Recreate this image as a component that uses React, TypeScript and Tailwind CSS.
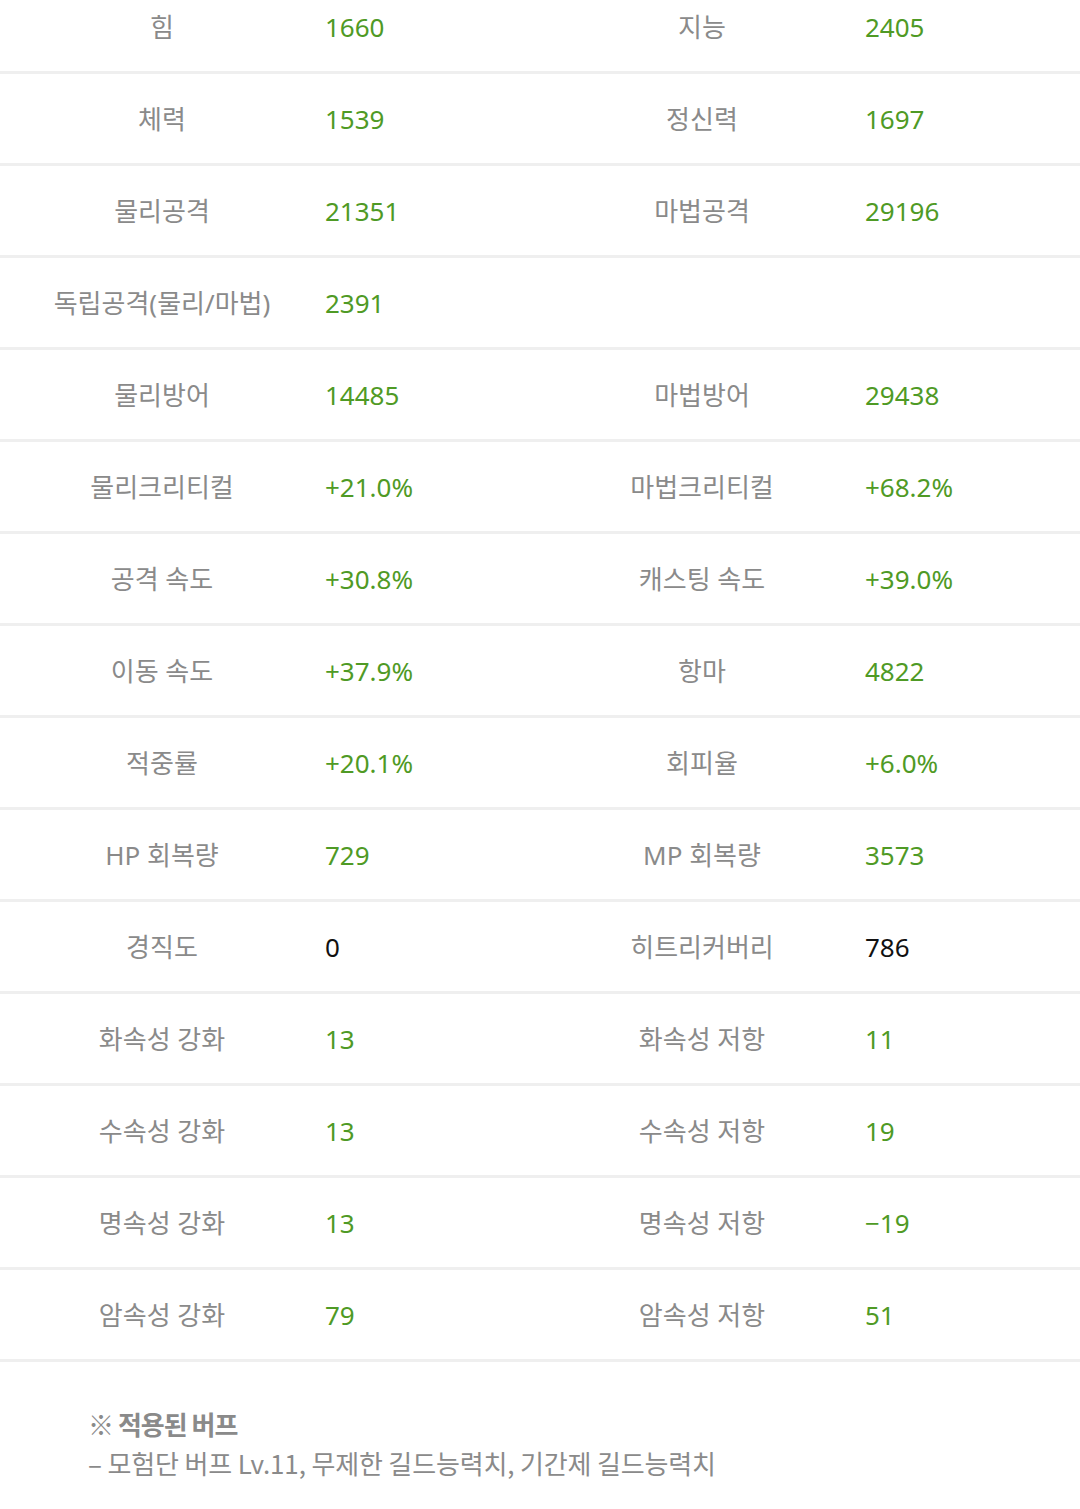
import React from 'react';

interface Stat {
  label: string;
  value: string;
  plain?: boolean;
}

const rows: [Stat, Stat | null][] = [
  [{ label: '힘', value: '1660' }, { label: '지능', value: '2405' }],
  [{ label: '체력', value: '1539' }, { label: '정신력', value: '1697' }],
  [{ label: '물리공격', value: '21351' }, { label: '마법공격', value: '29196' }],
  [{ label: '독립공격(물리/마법)', value: '2391' }, null],
  [{ label: '물리방어', value: '14485' }, { label: '마법방어', value: '29438' }],
  [{ label: '물리크리티컬', value: '+21.0%' }, { label: '마법크리티컬', value: '+68.2%' }],
  [{ label: '공격 속도', value: '+30.8%' }, { label: '캐스팅 속도', value: '+39.0%' }],
  [{ label: '이동 속도', value: '+37.9%' }, { label: '항마', value: '4822' }],
  [{ label: '적중률', value: '+20.1%' }, { label: '회피율', value: '+6.0%' }],
  [{ label: 'HP 회복량', value: '729' }, { label: 'MP 회복량', value: '3573' }],
  [{ label: '경직도', value: '0', plain: true }, { label: '히트리커버리', value: '786', plain: true }],
  [{ label: '화속성 강화', value: '13' }, { label: '화속성 저항', value: '11' }],
  [{ label: '수속성 강화', value: '13' }, { label: '수속성 저항', value: '19' }],
  [{ label: '명속성 강화', value: '13' }, { label: '명속성 저항', value: '−19' }],
  [{ label: '암속성 강화', value: '79' }, { label: '암속성 저항', value: '51' }],
];

const Cell = ({ stat }: { stat: Stat | null }) => (
  <>
    <div className="w-[324px] text-center text-[#8a8a8a]">{stat?.label}</div>
    <div className={`w-[216px] pl-[1px] ${stat?.plain ? 'text-[#111]' : 'text-[#4f9a25]'}`}>
      {stat?.value}
    </div>
  </>
);

const App = () => {
  return (
    <div
      className="w-[1080px] bg-white overflow-hidden h-[1509px]"
      style={{ fontFamily: '"Noto Sans", "Noto Sans CJK KR", sans-serif' }}
    >
      <div className="-mt-[18px]">
        {rows.map((r, i) => (
          <div
            key={i}
            className="flex items-center h-[92px] border-b-[3px] border-[#efefef] text-[26px] leading-none"
          >
            <Cell stat={r[0]} />
            <Cell stat={r[1]} />
          </div>
        ))}
      </div>

      {/* Buffs */}
      <div className="pl-[88px] pt-[43px] text-[#8a8a8a]" style={{ fontFamily: '"Noto Sans CJK KR", sans-serif' }}>
        <p className="text-[26px] font-bold leading-[38px] tracking-[-1px]">※ 적용된 버프</p>
        <p className="text-[26px] leading-[40px] tracking-[-0.15px]">– 모험단 버프 Lv.11, 무제한 길드능력치, 기간제 길드능력치</p>
      </div>
    </div>
  );
};

export default App;
